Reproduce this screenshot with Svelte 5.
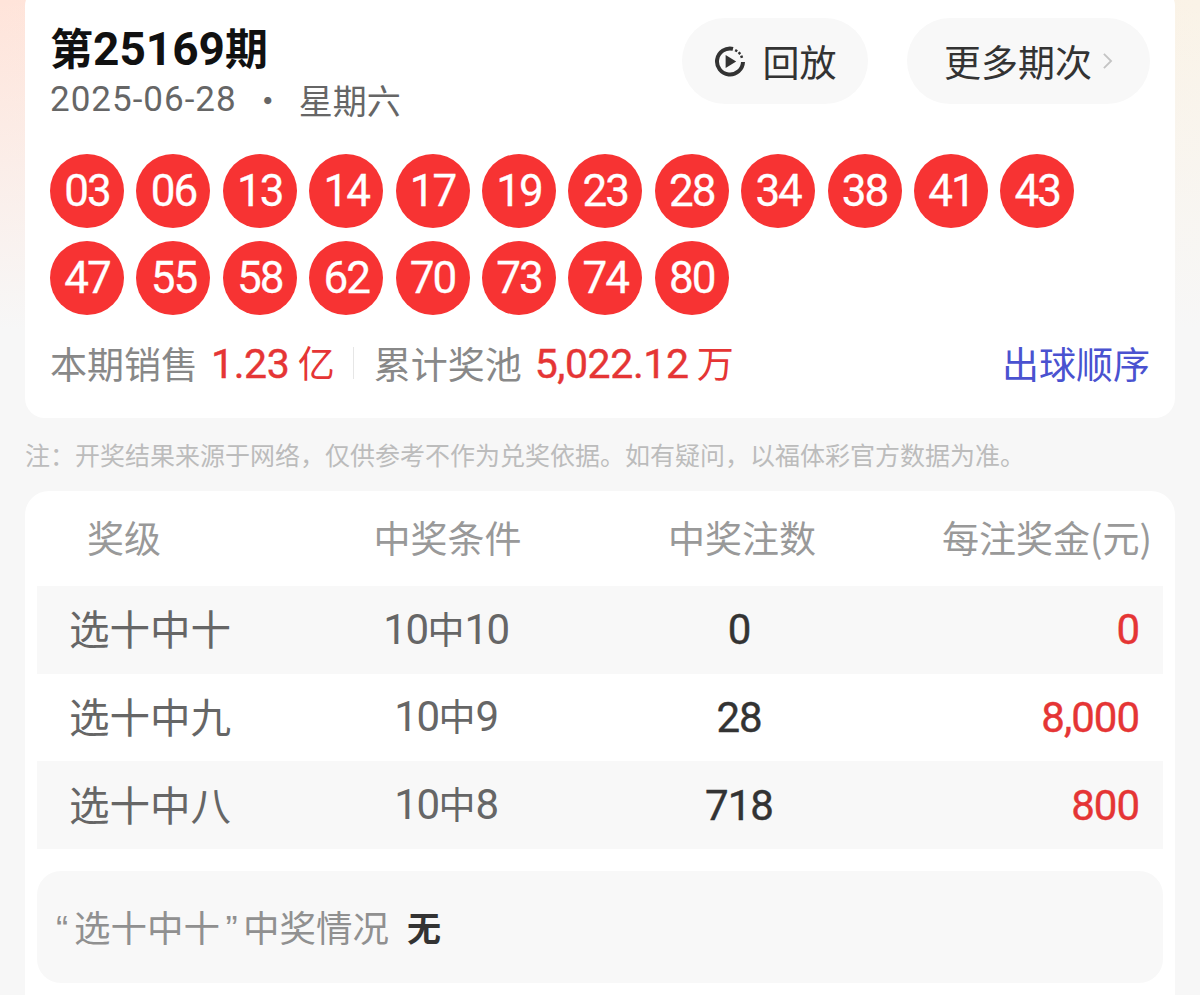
<script lang="ts">
  const balls = ["03","06","13","14","17","19","23","28","34","38","41","43","47","55","58","62","70","73","74","80"];
  const rows = [
    { name: "选十中十", pick: "10", hit: "10", count: "0", prize: "0" },
    { name: "选十中九", pick: "10", hit: "9", count: "28", prize: "8,000" },
    { name: "选十中八", pick: "10", hit: "8", count: "718", prize: "800" },
  ];
</script>

<div class="page">
  <section class="card draw">
    <div class="head">
      <div>
        <h1>第<span class="num">25169</span>期</h1>
        <p class="date"><span class="num">2025-06-28</span><i>·</i>星期六</p>
      </div>
      <div class="actions">
        <button class="replay">
          <svg viewBox="0 0 32 32" width="32" height="32" aria-hidden="true">
            <path d="M19 3.85A13 13 0 1 0 29 17" fill="none" stroke="#333" stroke-width="4" />
            <path d="M22.8 4.6l-1.2 2.2M26.4 7.4l-1.9 1.6M28.8 11.4l-2.4.8" fill="none" stroke="#333" stroke-width="2.4" />
            <path d="M11.6 10v13l10.6-6.5z" fill="#333" />
          </svg>
          回放
        </button>
        <button class="more">
          更多期次
          <svg viewBox="0 0 12 20" width="11" height="18" aria-hidden="true">
            <path d="M2 2l8 8-8 8" fill="none" stroke="#c4c4c4" stroke-width="2" />
          </svg>
        </button>
      </div>
    </div>

    <div class="balls">
      {#each balls as b}
        <span class="ball num">{b}</span>
      {/each}
    </div>

    <div class="stats">
      <span class="label">本期销售</span>
      <span class="val"><span class="num">1.23</span> 亿</span>
      <span class="sep"></span>
      <span class="label">累计奖池</span>
      <span class="val"><span class="num">5,022.12</span> 万</span>
      <a class="order" href="#order">出球顺序</a>
    </div>
  </section>

  <p class="note">注&#xFF1A;开奖结果来源于网络&#xFF0C;仅供参考不作为兑奖依据。如有疑问&#xFF0C;以福体彩官方数据为准。</p>

  <section class="card prizes">
    <div class="row th">
      <span class="first">奖级</span>
      <span class="second">中奖条件</span>
      <span class="third">中奖注数</span>
      <span class="last">每注奖金(元)</span>
    </div>
    {#each rows as r}
      <div class="row td">
        <span class="first">{r.name}</span>
        <span class="cond num">{r.pick}<span class="zh">中</span>{r.hit}</span>
        <span class="count num">{r.count}</span>
        <span class="last prize num">{r.prize}</span>
      </div>
    {/each}
    <div class="winners">
      <span class="q"><span class="qm">“</span>选十中十<span class="qm end">”</span>中奖情况</span>
      <b>无</b>
    </div>
  </section>
</div>

<style>
  :global(body) { margin: 0; overflow: hidden; background: #f7f7f7; }
  .page {
    height: 995px;
    overflow: hidden;
    box-sizing: border-box;
    padding: 0 25px;
    background:
      linear-gradient(to bottom, rgba(247,247,247,0), #f7f7f7 330px),
      linear-gradient(to right, #ffe4da, #faf3e7);
    font-family: "Noto Sans CJK SC", "Noto Sans", sans-serif;
    color: #333;
  }
  .num { font-family: Roboto, "Noto Sans CJK SC", sans-serif; }
  .card { background: #fff; border-radius: 20px; }

  .draw { margin-top: -14px; height: 432px; box-sizing: border-box; padding: 30px 25px 0; }
  .head { display: flex; justify-content: space-between; align-items: flex-start; }
  h1 { margin: 0; font-size: 43px; line-height: 60px; font-weight: 700; color: #111; }
  h1 .num { font-size: 46px; font-weight: 700; }
  .date { margin: 0; font-size: 34px; line-height: 42px; color: #666; display: flex; align-items: center; }
  .date .num { font-size: 35px; font-weight: 400; letter-spacing: 1px; }
  .date i { font-style: normal; margin: 0 14px 0 14px; }
  .actions { display: flex; gap: 39px; margin-top: 2px; }
  button {
    display: flex; align-items: center; height: 86px; box-sizing: border-box;
    border: 0; border-radius: 43px; background: #f8f8f8; color: #333;
    font: inherit; font-size: 37px; padding: 0;
  }
  .replay { width: 186px; justify-content: center; gap: 17px; }
  .more { width: 243px; justify-content: center; gap: 10px; }

  .balls { display: flex; flex-wrap: wrap; column-gap: 12.4px; row-gap: 12.5px; margin-top: 33px; width: 1040px; }
  .ball {
    width: 74px; height: 74px; border-radius: 50%; background: #f73333; color: #fff;
    display: flex; align-items: center; justify-content: center;
    font-size: 44px; letter-spacing: -2px; -webkit-text-stroke: 0.3px #fff;
  }

  .stats { display: flex; align-items: center; margin-top: 21px; font-size: 37px; line-height: 52px; }
  .label { color: #888; }
  .val { color: #e53535; margin-left: 13px; }
  .val .num { font-size: 41px; letter-spacing: -0.4px; -webkit-text-stroke: 0.4px #e53535; }
  .sep { width: 1px; height: 32px; background: #e6e6e6; margin: 0 20px 0 18px; }
  .order { margin-left: auto; color: #4a52d0; text-decoration: none; }

  .note { margin: 0; height: 73px; line-height: 72px; font-size: 25px; color: #bcbcbc; white-space: nowrap; }

  .prizes { border-radius: 24px 24px 0 0; padding: 0 12px; height: 520px; }
  .row {
    display: grid;
    grid-template-columns: 262px 294px 292px 1fr;
    align-items: center;
    box-sizing: border-box;
    font-size: 37px;
    text-align: center;
  }
  .th { height: 95px; padding-bottom: 4px; color: #999; }
  .th .first { text-align: left; padding-left: 50px; }
  .th .second { padding-left: 3px; }
  .th .third { padding-left: 6px; }
  .th .last { text-align: right; padding-right: 11px; white-space: nowrap; }
  .td { height: 87.67px; padding-bottom: 4px; color: #666; }
  .td:nth-of-type(even) { background: #f8f8f8; }
  .td .first { text-align: left; padding-left: 32px; font-size: 40.5px; }
  .cond { font-size: 42px; letter-spacing: -1.5px; }
  .zh { font-family: "Noto Sans CJK SC", sans-serif; font-size: 37px; letter-spacing: 0; }
  .count { padding-top: 4px; font-size: 42px; letter-spacing: -1px; color: #333; -webkit-text-stroke: 0.4px #333; }
  .prize { text-align: right; padding: 4px 24px 0 0; font-size: 42px; letter-spacing: -1px; color: #e53535; -webkit-text-stroke: 0.4px #e53535; }

  .winners {
    display: flex; align-items: center; height: 112px; margin-top: 22px; padding-left: 19px;
    background: #f8f8f8; border-radius: 24px; font-size: 36.5px;
  }
  .q { color: #909090; }
  .qm { display: inline-block; width: 18px; font-family: "Liberation Sans", sans-serif; }
  .qm.end { width: 23px; text-align: center; }
  .winners b { margin-left: 18px; font-size: 34px; color: #333; font-weight: 700; }
</style>
